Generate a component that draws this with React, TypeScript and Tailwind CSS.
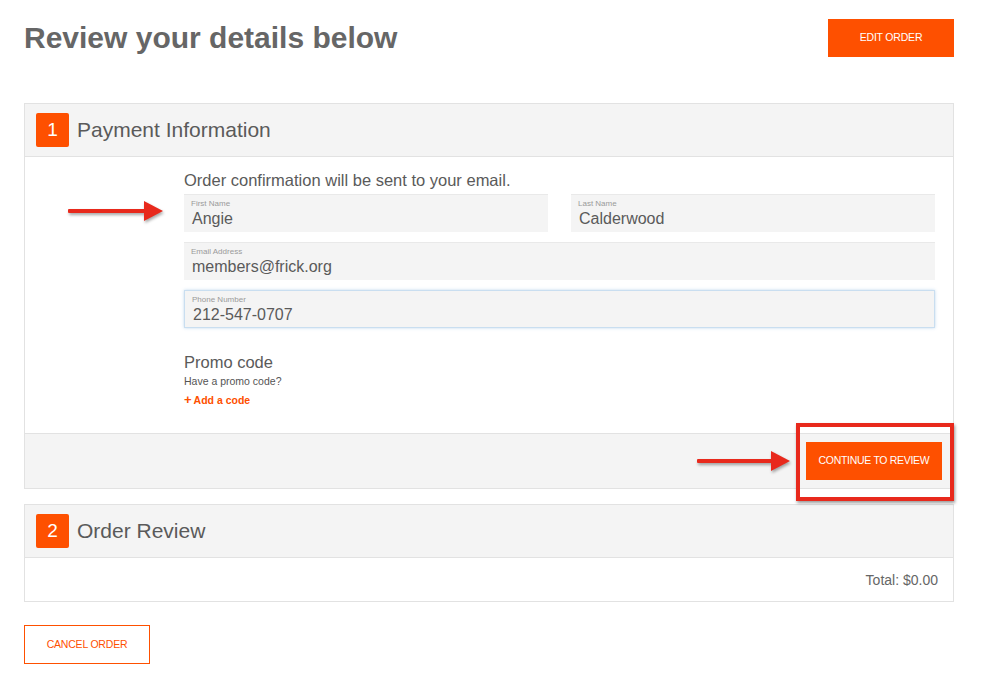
import React from 'react'

const ORANGE = 'bg-[#fe5000]'

function Arrow({ className, width }: { className: string; width: number }) {
  // red callout arrow with a soft shadow, as pasted over the screenshot
  return (
    <svg
      className={className}
      width={width + 6}
      height={28}
      viewBox={`0 0 ${width + 6} 28`}
      style={{ filter: 'drop-shadow(1px 2px 1.5px rgba(0,0,0,0.35))' }}
    >
      <rect x={0} y={12} width={width - 16} height={4} rx={1} fill="#e8291c" />
      <polygon points={`${width - 19},4 ${width},14 ${width - 19},24`} fill="#e8291c" />
    </svg>
  )
}

function Field({ label, value, focused }: { label: string; value: string; focused?: boolean }) {
  return (
    <div
      className={
        'h-[38px] bg-[#f4f4f4] px-[7px] pt-[4px] ' +
        (focused
          ? 'border border-[#c9def0] shadow-[0_0_3px_rgba(120,170,220,0.45)]'
          : 'border-t border-[#e9e9e9]')
      }
    >
      <div className="text-[8px] leading-[10px] text-[#9a9a9a]">{label}</div>
      <div className="text-[16px] leading-[19px] text-[#5a5a5a] pl-[1px]">{value}</div>
    </div>
  )
}

function SectionHeader({ num, title }: { num: string; title: string }) {
  return (
    <div className="h-[53px] bg-[#f4f4f4] border-b border-[#e2e2e2] flex items-center pl-[11px] pb-[1px]">
      <div className={`${ORANGE} w-[33px] h-[34px] rounded-[2px] flex items-center justify-center text-white text-[19px] leading-none`}>
        {num}
      </div>
      <div className="ml-[8px] text-[21px] leading-[24px] text-[#5a5a5a]">{title}</div>
    </div>
  )
}

export default function App() {
  return (
    <div
      className="relative w-[1000px] h-[682px] bg-white pl-[24px] pr-[46px] pt-[19px]"
      style={{ fontFamily: '"Liberation Sans", Arial, Helvetica, sans-serif' }}
    >
      {/* Page header */}
      <div className="flex justify-between items-start">
        <h1 className="mt-[1px] text-[30px] leading-[36px] font-bold text-[#666]">Review your details below</h1>
        <button className={`${ORANGE} w-[126px] h-[38px] text-white text-[10.5px] tracking-[-0.2px]`}>EDIT ORDER</button>
      </div>

      {/* 1 — Payment information */}
      <div className="mt-[46px] border border-[#e2e2e2]">
        <SectionHeader num="1" title="Payment Information" />
        <div className="pl-[159px] pr-[18px] pt-[13px] pb-[27px]">
          <p className="text-[16.5px] leading-[20px] text-[#5a5a5a]">Order confirmation will be sent to your email.</p>
          <div className="mt-[4px] grid grid-cols-2 gap-x-[23px]">
            <Field label="First Name" value="Angie" />
            <Field label="Last Name" value="Calderwood" />
          </div>
          <div className="mt-[10px]">
            <Field label="Email Address" value="members@frick.org" />
          </div>
          <div className="mt-[10px]">
            <Field label="Phone Number" value="212-547-0707" focused />
          </div>
          <p className="mt-[24px] text-[16.5px] leading-[20px] text-[#5a5a5a]">Promo code</p>
          <p className="mt-[3px] text-[10.5px] leading-[12px] text-[#555]">Have a promo code?</p>
          <p className="mt-[7px] h-[12px] text-[10.5px] leading-[12px] text-[#fe5000] font-semibold flex items-center">
            <span className="font-bold text-[13px] leading-[12px] mr-[2px]">+</span>Add a code
          </p>
        </div>
        <div className="h-[55px] bg-[#f4f4f4] border-t border-[#e2e2e2] flex items-center justify-end pr-[11px]">
          <button className={`${ORANGE} w-[136px] h-[38px] text-white text-[10.5px] tracking-[-0.3px]`}>CONTINUE TO REVIEW</button>
        </div>
      </div>

      {/* 2 — Order review */}
      <div className="mt-[15px] border border-[#e2e2e2]">
        <SectionHeader num="2" title="Order Review" />
        <div className="h-[43px] flex items-center justify-end pr-[15px] pt-[1px]">
          <span className="text-[14px] text-[#666]">Total: $0.00</span>
        </div>
      </div>

      <button className="mt-[23px] w-[126px] h-[39px] border border-[#fe5000] text-[#fe5000] text-[10.5px] tracking-[-0.2px]">
        CANCEL ORDER
      </button>

      {/* annotations laid over the screenshot */}
      <Arrow className="absolute left-[68px] top-[197px]" width={95} />
      <Arrow className="absolute left-[697px] top-[447px]" width={93} />
      <div className="absolute left-[796px] top-[423px] w-[158px] h-[78px] border-[4px] border-[#e8291c] shadow-[1px_2px_3px_rgba(0,0,0,0.4)]" />
    </div>
  )
}
